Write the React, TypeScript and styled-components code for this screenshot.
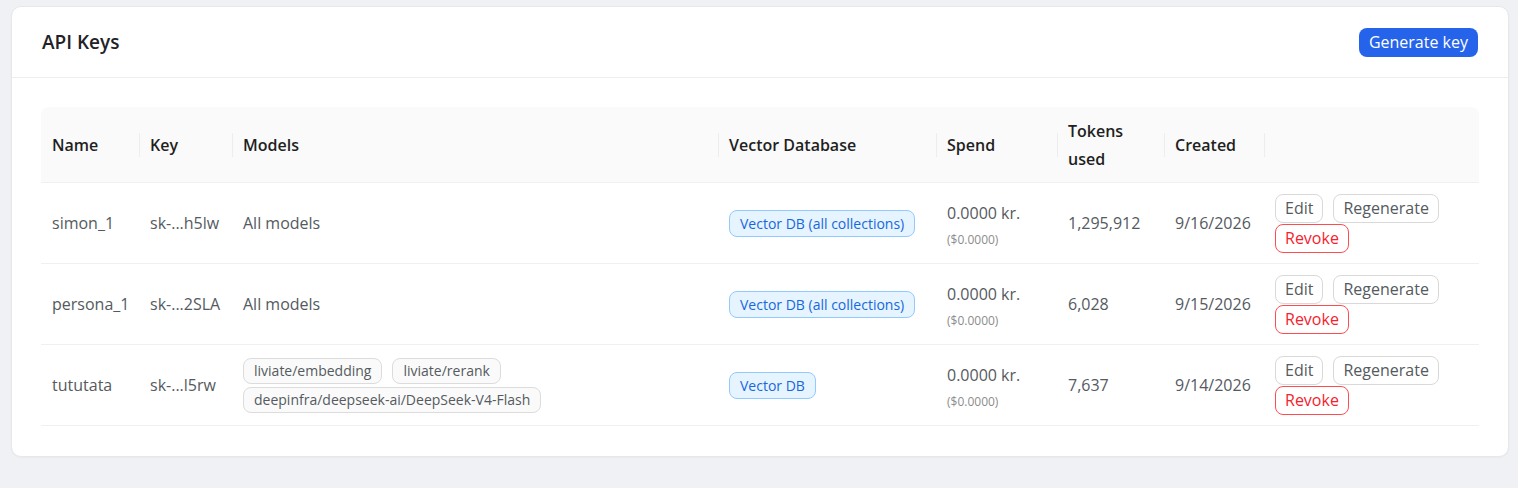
import styled, {createGlobalStyle} from 'styled-components';

type ApiKey = {
  name: string;
  key: string;
  models: string[] | null;
  vectorDb: string;
  spend: string;
  spendUsd: string;
  tokens: string;
  created: string;
};

const keys: ApiKey[] = [
  {
    name: 'simon_1',
    key: 'sk-...h5lw',
    models: null,
    vectorDb: 'Vector DB (all collections)',
    spend: '0.0000 kr.',
    spendUsd: '($0.0000)',
    tokens: '1,295,912',
    created: '9/16/2026',
  },
  {
    name: 'persona_1',
    key: 'sk-...2SLA',
    models: null,
    vectorDb: 'Vector DB (all collections)',
    spend: '0.0000 kr.',
    spendUsd: '($0.0000)',
    tokens: '6,028',
    created: '9/15/2026',
  },
  {
    name: 'tututata',
    key: 'sk-...l5rw',
    models: ['liviate/embedding', 'liviate/rerank', 'deepinfra/deepseek-ai/DeepSeek-V4-Flash'],
    vectorDb: 'Vector DB',
    spend: '0.0000 kr.',
    spendUsd: '($0.0000)',
    tokens: '7,637',
    created: '9/14/2026',
  },
];

// column widths of the keys table
const columns = [
  {title: 'Name', width: 98},
  {title: 'Key', width: 93},
  {title: 'Models', width: 486},
  {title: 'Vector Database', width: 218},
  {title: 'Spend', width: 121},
  {title: 'Tokens used', width: 107},
  {title: 'Created', width: 100},
  {title: '', width: 215},
];

const GlobalStyle = createGlobalStyle`
  body {
    margin: 0;
    background: #f0f1f5;
    font-family: "Segoe UI", "Open Sans", "Noto Sans", sans-serif;
  }
`;

const Page = styled.div`
  padding: 6px 9px 0 11px;
  height: 488px;
  box-sizing: border-box;
`;

const Card = styled.div`
  background: #fff;
  border: 1px solid #e6e7eb;
  border-radius: 10px;
  box-shadow: 0 1px 2px rgba(0, 0, 0, 0.03);
`;

const CardHeader = styled.div`
  display: flex;
  align-items: center;
  justify-content: space-between;
  height: 70px;
  padding: 0 30px;
  border-bottom: 1px solid #eceef1;
`;

const Title = styled.h2`
  margin: 0;
  font-size: 19px;
  font-weight: 600;
  color: #1f2328;
`;

const PrimaryButton = styled.button`
  height: 29px;
  padding: 0 10px;
  border: none;
  border-radius: 8px;
  background: #2563eb;
  color: #fff;
  font-family: inherit;
  font-size: 16px;
  cursor: pointer;
`;

const CardBody = styled.div`
  padding: 29px 29px 30px 29px;
`;

const Table = styled.table`
  width: 100%;
  border-collapse: separate;
  border-spacing: 0;
  table-layout: fixed;
`;

const HeadCell = styled.th<{$sep: boolean}>`
  position: relative;
  background: #fafafa;
  padding: 9.5px 11px;
  text-align: left;
  font-size: 16px;
  font-weight: 600;
  line-height: 28px;
  color: #1f1f1f;
  border-bottom: 1px solid #f0f0f0;

  &:first-child {
    border-top-left-radius: 8px;
  }
  &:last-child {
    border-top-right-radius: 8px;
  }

  &::before {
    content: '';
    display: ${p => (p.$sep ? 'block' : 'none')};
    position: absolute;
    top: 50%;
    left: 0;
    width: 1px;
    height: 24px;
    transform: translateY(-50%);
    background: #ededed;
  }
`;

const Cell = styled.td`
  padding: 10px 11px;
  font-size: 16px;
  line-height: 28px;
  color: #555a60;
  border-bottom: 1px solid #f0f0f0;
  vertical-align: middle;
  height: 60px;
`;

const TagList = styled.div`
  display: flex;
  flex-wrap: wrap;
  gap: 3px 10px;
`;

const Tag = styled.span<{$tone?: 'blue' | 'gray'}>`
  display: inline-block;
  padding: 0 10px;
  height: ${p => (p.$tone === 'blue' ? 27 : 26)}px;
  line-height: ${p => (p.$tone === 'blue' ? 25 : 24)}px;
  box-sizing: border-box;
  border-radius: 8px;
  font-size: 14px;
  white-space: nowrap;
  border: 1px solid ${p => (p.$tone === 'blue' ? '#91caff' : '#dcdcdc')};
  background: ${p => (p.$tone === 'blue' ? '#e6f4ff' : '#fafafa')};
  color: ${p => (p.$tone === 'blue' ? '#1668dc' : '#555a60')};
`;

const Spend = styled.div`
  padding-top: 5px;
`;

const SpendMain = styled.div`
  line-height: 28px;
`;

const SpendSub = styled.div`
  font-size: 12px;
  line-height: 26px;
  color: #8c8c8c;
`;

const Actions = styled.div`
  display: flex;
  flex-wrap: wrap;
  gap: 1px 10px;
  width: 180px;
`;

const ActionButton = styled.button<{$danger?: boolean}>`
  height: 29px;
  padding: 0 9px;
  border-radius: 8px;
  background: #fff;
  font-family: inherit;
  font-size: 16px;
  cursor: pointer;
  border: 1px solid ${p => (p.$danger ? '#ff4d4f' : '#d9d9d9')};
  color: ${p => (p.$danger ? '#f5222d' : '#555a60')};
`;

const App = () => {
  return (
    <>
      <GlobalStyle />
      <Page>
        <Card>
          <CardHeader>
            <Title>API Keys</Title>
            <PrimaryButton>Generate key</PrimaryButton>
          </CardHeader>
          <CardBody>
            <Table>
              <colgroup>
                {columns.map((c, i) => (
                  <col key={i} style={{width: c.width}} />
                ))}
              </colgroup>
              <thead>
                <tr>
                  {columns.map((c, i) => (
                    <HeadCell key={i} $sep={i > 0}>
                      {c.title}
                    </HeadCell>
                  ))}
                </tr>
              </thead>
              <tbody>
                {keys.map(k => (
                  <tr key={k.name}>
                    <Cell>{k.name}</Cell>
                    <Cell>{k.key}</Cell>
                    <Cell>
                      {k.models ? (
                        <TagList>
                          {k.models.map(m => (
                            <Tag key={m}>{m}</Tag>
                          ))}
                        </TagList>
                      ) : (
                        'All models'
                      )}
                    </Cell>
                    <Cell>
                      <Tag $tone="blue">{k.vectorDb}</Tag>
                    </Cell>
                    <Cell>
                      <Spend>
                        <SpendMain>{k.spend}</SpendMain>
                        <SpendSub>{k.spendUsd}</SpendSub>
                      </Spend>
                    </Cell>
                    <Cell>{k.tokens}</Cell>
                    <Cell>{k.created}</Cell>
                    <Cell>
                      <Actions>
                        <ActionButton>Edit</ActionButton>
                        <ActionButton>Regenerate</ActionButton>
                        <ActionButton $danger>Revoke</ActionButton>
                      </Actions>
                    </Cell>
                  </tr>
                ))}
              </tbody>
            </Table>
          </CardBody>
        </Card>
      </Page>
    </>
  );
};

export default App;
